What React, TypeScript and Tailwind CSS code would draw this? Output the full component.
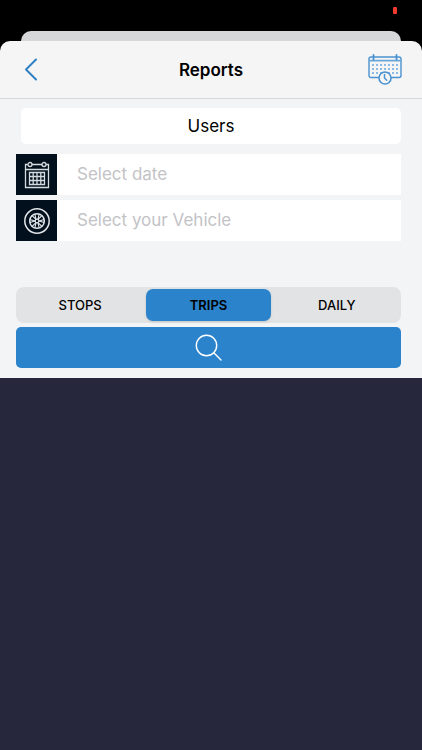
import React, { useState } from 'react';

const TABS = ['STOPS', 'TRIPS', 'DAILY'];

const DOT_COLUMNS = [5, 9, 13, 17, 21, 25, 29];
const DOT_ROWS = [11, 15, 19];

function BackIcon() {
  return (
    <svg width="14" height="24" viewBox="0 0 14 24" fill="none" stroke="#2f80c2" strokeWidth="2" strokeLinecap="round" strokeLinejoin="round" aria-hidden="true">
      <path d="M12 1.5 2 11.5l10 10" />
    </svg>
  );
}

function ScheduleIcon() {
  return (
    <svg width="34" height="32" viewBox="0 0 34 32" fill="none" stroke="#4a92d0" strokeWidth="1.4" strokeLinecap="round" aria-hidden="true">
      <rect x="1" y="3" width="32" height="20.5" rx="2" />
      <path d="M1.5 6.7h31" stroke="#6ba6db" strokeWidth="1.8" />
      <path d="M5.5 1v4.5M28.5 1v4.5" strokeWidth="1.8" />
      {DOT_ROWS.map((y) =>
        DOT_COLUMNS.map((x) => <rect key={`${x}-${y}`} x={x - 1} y={y - 1} width="2" height="2" fill="#8cbae2" stroke="none" />)
      )}
      <circle cx="17" cy="24" r="6" fill="#f6f5f6" strokeWidth="1.6" />
      <path d="M16.5 20.5V24l2.2 2.2" strokeWidth="1.5" />
    </svg>
  );
}

function CalendarIcon() {
  return (
    <svg width="26" height="28" viewBox="0 0 26 28" fill="none" stroke="#d5dbdf" strokeWidth="1.3" aria-hidden="true">
      <path d="M3.8 3.5H1.5v23h23v-23h-2.3M7.8 3.5h10.4M1.5 8.5h23" />
      <circle cx="6" cy="3.5" r="2" />
      <circle cx="20" cy="3.5" r="2" />
      <path d="M5.5 11.5h15v12h-15zM9.2 11.5v12M13 11.5v12M16.8 11.5v12M5.5 15.5h15M5.5 19.5h15" />
    </svg>
  );
}

function WheelIcon() {
  return (
    <svg width="28" height="28" viewBox="0 0 28 28" fill="none" stroke="#e2e6e9" strokeWidth="1.5" aria-hidden="true">
      <circle cx="14" cy="14" r="12.2" />
      <circle cx="14" cy="14" r="7.3" strokeWidth="1.5" />
      <circle cx="14" cy="14" r="1.8" strokeWidth="1.2" />
      {[0, 60, 120, 180, 240, 300].map((angle) => (
        <g key={angle} transform={`rotate(${angle} 14 14)`}>
          <path d="M13 12.2 11.8 7M15 12.2 16.2 7" strokeWidth="1.1" />
        </g>
      ))}
    </svg>
  );
}

function SearchIcon() {
  return (
    <svg width="28" height="28" viewBox="0 0 28 28" fill="none" stroke="#fff" strokeWidth="1.4" strokeLinecap="round" aria-hidden="true">
      <circle cx="11.5" cy="11.5" r="10.2" />
      <path d="m18.8 18.8 7.2 7.2" />
    </svg>
  );
}

interface PickerFieldProps {
  label: string;
  icon: React.ReactNode;
}

function PickerField({ label, icon }: PickerFieldProps) {
  return (
    <label className="flex h-[41px] bg-white">
      <span className="flex w-[41px] shrink-0 items-center justify-center bg-[#02101d]">{icon}</span>
      <input
        type="text"
        aria-label={label}
        placeholder={label}
        className="min-w-0 flex-1 px-5 text-[17px] text-black outline-none placeholder:text-[#c3c3c6]"
      />
    </label>
  );
}

function App() {
  const [activeTab, setActiveTab] = useState('TRIPS');

  return (
    <div className="flex min-h-screen flex-col bg-[#26273c] font-['Inter','Liberation_Sans',sans-serif] text-black">
      <div className="bg-black">
        <div className="flex h-[31px] justify-end px-[25px] pt-[7px]">
          <span className="h-[7px] w-1 rounded-[1px] bg-[#f03c2e]" />
        </div>
        <div className="mx-[21px] h-[10px] rounded-t-[10px] bg-[#d6d7d9]" />
        <header className="grid h-[58px] grid-cols-[1fr_auto_1fr] items-center rounded-t-[10px] border-b border-[#d6d7da] bg-[#f6f5f6] px-5">
          <button type="button" aria-label="Back" className="justify-self-start pl-1">
            <BackIcon />
          </button>
          <h1 className="pt-0.5 text-[17px] font-semibold">Reports</h1>
          <button type="button" aria-label="Schedule" className="justify-self-end">
            <ScheduleIcon />
          </button>
        </header>
      </div>

      <main className="bg-[#f2f4f6] px-[21px] pt-[9px] pb-[10px]">
        <button type="button" className="block h-9 w-full rounded-[5px] bg-white pt-0.5 text-[17px]">
          Users
        </button>

        <div className="-ml-[5px] pt-[10px]">
          <div className="flex flex-col gap-[5px]">
            <PickerField label="Select date" icon={<CalendarIcon />} />
            <PickerField label="Select your Vehicle" icon={<WheelIcon />} />
          </div>

          <div className="mt-[46px] grid h-9 grid-cols-3 rounded-lg bg-[#e2e3e5]">
            {TABS.map((tab) => (
              <button
                key={tab}
                type="button"
                aria-pressed={tab === activeTab}
                onClick={() => setActiveTab(tab)}
                className={
                  tab === activeTab
                    ? 'm-0.5 rounded-[7px] bg-[#2b83cc] pt-0.5 text-[13px] font-semibold shadow-sm'
                    : 'm-0.5 rounded-[7px] pt-0.5 text-[13px] font-medium'
                }
              >
                {tab}
              </button>
            ))}
          </div>

          <button type="button" aria-label="Search" className="mt-1 flex h-[41px] w-full items-center justify-center rounded-[5px] bg-[#2b83cc]">
            <SearchIcon />
          </button>
        </div>
      </main>
    </div>
  );
}

export default App;
